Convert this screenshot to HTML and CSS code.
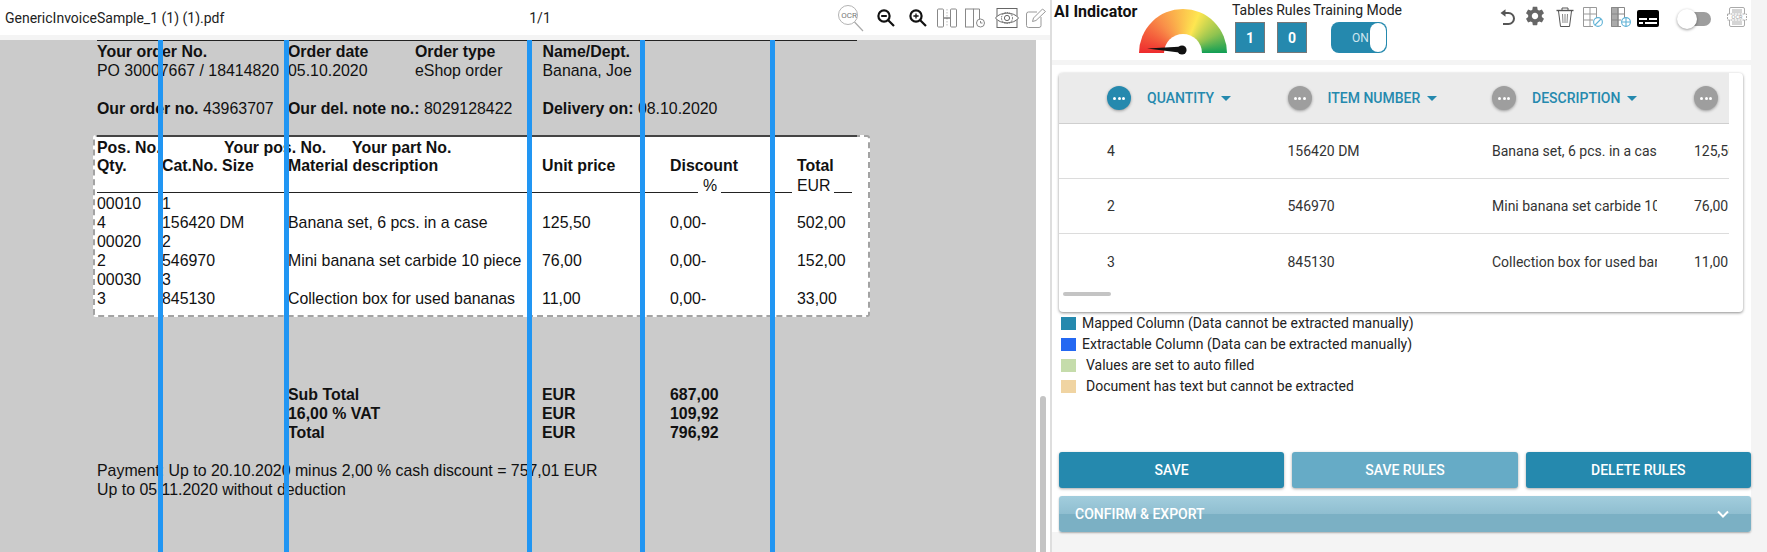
FILE: index.html
```html
<!DOCTYPE html>
<html>
<head>
  <title>Invoice Mapping</title>
  <link rel="stylesheet" href="styles.css">
</head>
<body>
  <div class="app">
    <section class="viewer">
      <div class="viewer-bar">
        <span class="file-name">GenericInvoiceSample_1 (1) (1).pdf</span>
        <span class="page-count">1/1</span>
        <div class="viewer-tools">
          <svg class="ocr-icon" width="26" height="28" viewBox="0 0 26 28" fill="none" stroke="#aaa" stroke-width="0.9">
            <circle cx="10" cy="11" r="9.5"/>
            <path d="M16.5 18L25 27" stroke-width="1.2"/>
            <text x="11" y="14" text-anchor="middle" font-family="Roboto" font-size="8" fill="#777" stroke="none">OCR</text>
          </svg>
          <svg class="tool-out" width="18" height="18" viewBox="0 0 18 18" fill="none" stroke="#111" stroke-width="2.2">
            <circle cx="7" cy="7" r="5.6"/>
            <path d="M11 11L17 17M4.2 7H9.8" />
          </svg>
          <svg class="tool-in" width="18" height="18" viewBox="0 0 18 18" fill="none" stroke="#111" stroke-width="2.2">
            <circle cx="7" cy="7" r="5.6"/>
            <path d="M11 11L17 17"/>
            <path d="M4.4 7H9.6M7 4.4V9.6" stroke-width="1.3"/>
          </svg>
          <svg class="tool-split" width="20" height="20" viewBox="0 0 20 20" fill="none" stroke="#888" stroke-width="1">
            <rect x="0.5" y="1" width="6" height="18" rx="1"/>
            <rect x="13.5" y="1" width="6" height="18" rx="1"/>
            <path d="M10 1V19" stroke-dasharray="1.5 1.5" stroke="#bbb"/>
            <path d="M7 10H13" stroke="#444"/>
          </svg>
          <svg class="tool-clock" width="20" height="20" viewBox="0 0 20 20" fill="none" stroke="#888" stroke-width="1">
            <rect x="0.5" y="1" width="8" height="18"/>
            <path d="M8.5 1H14.5V11"/>
            <circle cx="15.5" cy="15" r="4"/>
            <path d="M15.5 13V15H17.5"/>
          </svg>
          <svg class="tool-eye" width="24" height="20" viewBox="0 0 24 20" fill="none" stroke="#666" stroke-width="1">
            <rect x="2" y="0.5" width="20" height="19"/>
            <path d="M0.5 10C5 3.5 19 3.5 23.5 10C19 16.5 5 16.5 0.5 10Z" fill="#fff"/>
            <circle cx="12" cy="10" r="5.5" stroke-dasharray="1.5 1"/>
            <circle cx="12" cy="10" r="2.6"/>
          </svg>
          <svg class="tool-edit" width="20" height="20" viewBox="0 0 20 20" fill="none" stroke="#999" stroke-width="1">
            <path d="M11 4H2.5A2 2 0 0 0 .5 6V17.5A2 2 0 0 0 2.5 19.5H13A2 2 0 0 0 15 17.5V9"/>
            <path d="M6.5 13.5L7.5 10L16.5 1L19.5 3.5L10 12.5Z"/>
          </svg>
        </div>
      </div>
      <div class="viewer-gap"></div>
      <div class="viewer-body">
        <div class="pdf-page">
          <div class="pdf-rule rule-top"></div>
          <b class="pdf-text" style="left:97px;top:2px">Your order No.</b>
          <b class="pdf-text" style="left:288px;top:2px">Order date</b>
          <b class="pdf-text" style="left:415px;top:2px">Order type</b>
          <b class="pdf-text" style="left:542.5px;top:2px">Name/Dept.</b>
          <span class="pdf-text" style="left:97px;top:21px">PO 30007667 / 18414820</span>
          <span class="pdf-text" style="left:288px;top:21px">05.10.2020</span>
          <span class="pdf-text" style="left:415px;top:21px">eShop order</span>
          <span class="pdf-text" style="left:542.5px;top:21px">Banana, Joe</span>
          <span class="pdf-text" style="left:97px;top:59px"><b>Our order no.</b> 43963707</span>
          <span class="pdf-text" style="left:288px;top:59px"><b>Our del. note no.:</b> 8029128422</span>
          <span class="pdf-text" style="left:542.5px;top:59px"><b>Delivery on:</b> 08.10.2020</span>

          <div class="pdf-table"></div>
          <div class="pdf-rule rule-table"></div>
          <b class="pdf-text" style="left:97px;top:98px">Pos. No.</b>
          <b class="pdf-text" style="left:224px;top:98px">Your pos. No.</b>
          <b class="pdf-text" style="left:352px;top:98px">Your part No.</b>
          <b class="pdf-text" style="left:97px;top:116px">Qty.</b>
          <b class="pdf-text" style="left:162px;top:116px">Cat.No. Size</b>
          <b class="pdf-text" style="left:288px;top:116px">Material description</b>
          <b class="pdf-text" style="left:542px;top:116px">Unit price</b>
          <b class="pdf-text" style="left:670px;top:116px">Discount</b>
          <b class="pdf-text" style="left:797px;top:116px">Total</b>
          <span class="pdf-text" style="left:703px;top:136px">%</span>
          <span class="pdf-text" style="left:797px;top:136px">EUR</span>
          <div class="pdf-rule rule-head-a"></div>
          <div class="pdf-rule rule-head-b"></div>
          <div class="pdf-rule rule-head-c"></div>

          <span class="pdf-text" style="left:97px;top:154px">00010</span>
          <span class="pdf-text" style="left:162px;top:154px">1</span>
          <span class="pdf-text" style="left:97px;top:173px">4</span>
          <span class="pdf-text" style="left:162px;top:173px">156420 DM</span>
          <span class="pdf-text" style="left:288px;top:173px">Banana set, 6 pcs. in a case</span>
          <span class="pdf-text" style="left:542px;top:173px">125,50</span>
          <span class="pdf-text" style="left:670px;top:173px">0,00-</span>
          <span class="pdf-text" style="left:797px;top:173px">502,00</span>
          <span class="pdf-text" style="left:97px;top:192px">00020</span>
          <span class="pdf-text" style="left:162px;top:192px">2</span>
          <span class="pdf-text" style="left:97px;top:211px">2</span>
          <span class="pdf-text" style="left:162px;top:211px">546970</span>
          <span class="pdf-text" style="left:288px;top:211px">Mini banana set carbide 10 piece</span>
          <span class="pdf-text" style="left:542px;top:211px">76,00</span>
          <span class="pdf-text" style="left:670px;top:211px">0,00-</span>
          <span class="pdf-text" style="left:797px;top:211px">152,00</span>
          <span class="pdf-text" style="left:97px;top:230px">00030</span>
          <span class="pdf-text" style="left:162px;top:230px">3</span>
          <span class="pdf-text" style="left:97px;top:249px">3</span>
          <span class="pdf-text" style="left:162px;top:249px">845130</span>
          <span class="pdf-text" style="left:288px;top:249px">Collection box for used bananas</span>
          <span class="pdf-text" style="left:542px;top:249px">11,00</span>
          <span class="pdf-text" style="left:670px;top:249px">0,00-</span>
          <span class="pdf-text" style="left:797px;top:249px">33,00</span>

          <b class="pdf-text" style="left:288px;top:345px">Sub Total</b>
          <b class="pdf-text" style="left:542px;top:345px">EUR</b>
          <b class="pdf-text" style="left:670px;top:345px">687,00</b>
          <b class="pdf-text" style="left:288px;top:364px">16,00 % VAT</b>
          <b class="pdf-text" style="left:542px;top:364px">EUR</b>
          <b class="pdf-text" style="left:670px;top:364px">109,92</b>
          <b class="pdf-text" style="left:288px;top:383px">Total</b>
          <b class="pdf-text" style="left:542px;top:383px">EUR</b>
          <b class="pdf-text" style="left:670px;top:383px">796,92</b>
          <span class="pdf-text" style="left:97px;top:421px">Payment: Up to 20.10.2020 minus 2,00 % cash discount = 757,01 EUR</span>
          <span class="pdf-text" style="left:97px;top:440px">Up to 05.11.2020 without deduction</span>

          <div class="col-line" style="left:158px"></div>
          <div class="col-line" style="left:284px"></div>
          <div class="col-line" style="left:527px"></div>
          <div class="col-line" style="left:640px"></div>
          <div class="col-line" style="left:770px"></div>
        </div>
        <div class="viewer-scroll"><div class="viewer-thumb"></div></div>
      </div>
    </section>

    <section class="side">
      <header class="side-head">
        <div class="ai-title">AI Indicator</div>
        <div class="gauge">
          <div class="gauge-hole"></div>
          <svg class="gauge-needle" width="44" height="14" viewBox="0 0 44 14">
            <path d="M0 4.5L36 2.5V9Z" fill="#111"/>
            <circle cx="35" cy="6" r="4.6" fill="#111"/>
          </svg>
        </div>
        <div class="stats">
          <div class="stats-labels">
            <span class="lab-tables">Tables</span>
            <span class="lab-rules">Rules</span>
            <span>Training Mode</span>
          </div>
          <div class="stats-values">
            <span class="stat-box">1</span>
            <span class="stat-box">0</span>
            <div class="train-toggle"><span>ON</span><i></i></div>
          </div>
        </div>
        <div class="side-tools">
          <svg class="tool-undo" width="18" height="18" viewBox="0 0 18 18" fill="none" stroke="#555" stroke-width="2">
            <path d="M6 5H9.5A5.5 5.5 0 1 1 9.5 16H4"/>
            <path d="M6.5 1.2V8.8L1.5 5Z" fill="#555" stroke="none"/>
          </svg>
          <svg class="tool-gear" width="22" height="22" viewBox="0 0 24 24" fill="#666"><path d="M19.43 12.98c.04-.32.07-.64.07-.98s-.03-.66-.07-.98l2.11-1.65c.19-.15.24-.42.12-.64l-2-3.46c-.12-.22-.39-.3-.61-.22l-2.49 1c-.52-.4-1.08-.73-1.69-.98l-.38-2.65C14.46 2.18 14.25 2 14 2h-4c-.25 0-.46.18-.49.42l-.38 2.65c-.61.25-1.17.59-1.69.98l-2.49-1c-.23-.09-.49 0-.61.22l-2 3.46c-.13.22-.07.49.12.64l2.11 1.65c-.04.32-.07.65-.07.98s.03.66.07.98l-2.11 1.65c-.19.15-.24.42-.12.64l2 3.46c.12.22.39.3.61.22l2.49-1c.52.4 1.08.73 1.69.98l.38 2.65c.03.24.24.42.49.42h4c.25 0 .46-.18.49-.42l.38-2.65c.61-.25 1.17-.59 1.69-.98l2.49 1c.23.09.49 0 .61-.22l2-3.46c.12-.22.07-.49-.12-.64l-2.11-1.65zM12 15.5c-1.93 0-3.5-1.57-3.5-3.5s1.57-3.5 3.5-3.5 3.5 1.57 3.5 3.5-1.57 3.5-3.5 3.5z"/></svg>
          <svg class="tool-trash" width="18" height="20" viewBox="0 0 18 20" fill="none" stroke="#555" stroke-width="1">
            <path d="M0.5 3.5H17.5" stroke-width="1.4"/>
            <path d="M6 3V1H12V3"/>
            <path d="M2.5 4L4.5 19.5H13.5L15.5 4"/>
            <path d="M6.5 7L7 16M9 7V16M11.5 7L11 16" stroke="#888"/>
          </svg>
          <svg class="tool-ban" width="20" height="20" viewBox="0 0 20 20" fill="none" stroke="#999" stroke-width="1">
            <path d="M0.5 0.5H13.5V11M0.5 0.5V19.5H10M0.5 7H13.5M0.5 13H10M7 0.5V19.5"/>
            <circle cx="15" cy="15" r="4.4" stroke="#5fb2d6" stroke-width="1.1"/>
            <path d="M12 18L18 12" stroke="#5fb2d6" stroke-width="1.1"/>
          </svg>
          <svg class="tool-plus" width="20" height="20" viewBox="0 0 20 20" fill="none" stroke="#888" stroke-width="1">
            <path d="M0.5 0.5H7V19.5H0.5Z" fill="#aaa"/>
            <path d="M0.5 0.5H13.5V11M0.5 19.5H10M0.5 7H13.5M0.5 13H10M7 0.5V19.5"/>
            <circle cx="15" cy="15" r="4.4" stroke="#5fb2d6" stroke-width="1.1"/>
            <path d="M10.6 15H19.4M15 10.6V19.4" stroke="#5fb2d6" stroke-width="1.1"/>
          </svg>
          <svg class="tool-subs" width="22" height="17" viewBox="0 0 22 17">
            <rect width="22" height="17" rx="2" fill="#000"/>
            <path d="M2 8H10V10H2ZM12 8H20V10H12ZM2 12H6V14H2ZM8 12H20V14H8Z" fill="#fff"/>
          </svg>
          <div class="mini-toggle"><i></i></div>
          <svg class="tool-ocr" width="20" height="20" viewBox="0 0 20 20" fill="none" stroke="#aaa" stroke-width="1">
            <rect x="2.5" y="0.5" width="15" height="19" rx="1.5"/>
            <path d="M5 3H15M5 5H15M5 15H15M5 17H15" />
            <rect x="0.5" y="7" width="19" height="6" fill="#fff" stroke-dasharray="2 1"/>
            <text x="10" y="12" text-anchor="middle" font-family="Roboto" font-size="5.5" fill="#999" stroke="none">OCR</text>
          </svg>
        </div>
      </header>
      <div class="side-gap"></div>

      <div class="side-main">
        <div class="card">
          <div class="grid-scroll">
            <div class="grid-row grid-head">
              <div class="head-cell"><span class="dots dots-on"><i></i><i></i><i></i></span><span class="head-label">QUANTITY</span><i class="caret"></i></div>
              <div class="head-cell"><span class="dots"><i></i><i></i><i></i></span><span class="head-label">ITEM NUMBER</span><i class="caret"></i></div>
              <div class="head-cell"><span class="dots"><i></i><i></i><i></i></span><span class="head-label">DESCRIPTION</span><i class="caret"></i></div>
              <div class="head-cell"><span class="dots"><i></i><i></i><i></i></span></div>
            </div>
            <div class="grid-row grid-line">
              <div>4</div><div>156420 DM</div><div class="cell-desc">Banana set, 6 pcs. in a case</div><div>125,50</div>
            </div>
            <div class="grid-row grid-line">
              <div>2</div><div>546970</div><div class="cell-desc">Mini banana set carbide 10 piece</div><div>76,00</div>
            </div>
            <div class="grid-row">
              <div>3</div><div>845130</div><div class="cell-desc">Collection box for used bananas</div><div>11,00</div>
            </div>
          </div>
          <div class="grid-thumb"></div>
        </div>

        <ul class="legend">
          <li><i class="swatch sw-mapped"></i>Mapped Column (Data cannot be extracted manually)</li>
          <li><i class="swatch sw-extract"></i>Extractable Column (Data can be extracted manually)</li>
          <li class="legend-wide"><i class="swatch sw-auto"></i>Values are set to auto filled</li>
          <li class="legend-wide"><i class="swatch sw-text"></i>Document has text but cannot be extracted</li>
        </ul>

        <div class="actions">
          <button class="btn">SAVE</button>
          <button class="btn btn-off">SAVE RULES</button>
          <button class="btn">DELETE RULES</button>
        </div>
        <div class="export">
          <span>CONFIRM &amp; EXPORT</span>
          <svg width="14" height="14" viewBox="0 0 14 14" fill="none" stroke="#fff" stroke-width="2"><path d="M2 4.5L7 9.5L12 4.5"/></svg>
        </div>
      </div>
    </section>
  </div>
</body>
</html>
```

FILE: styles.css
```css
* {
  box-sizing: border-box;
}
html, body {
  margin: 0;
  height: 552px;
  overflow: hidden;
}
body {
  background: #f4f4f4;
  font-family: Roboto, sans-serif;
  color: #222;
}
.app {
  display: flex;
  height: 552px;
}

/* left: pdf viewer */
.viewer {
  width: 1050px;
  display: flex;
  flex-direction: column;
  background: #fff;
}
.viewer-bar {
  height: 35px;
  display: flex;
  align-items: center;
  padding-left: 5px;
  font-size: 14px;
}
.file-name {
  width: 520px;
}
.page-count {
  width: 30px;
  text-align: center;
}
.viewer-tools {
  margin-left: 283px;
  display: flex;
  align-items: center;
  flex-shrink: 0;
}
.viewer-tools svg {
  display: block;
}
.ocr-icon {
  margin-top: 1px;
}
.tool-out {
  margin-left: 13px;
}
.tool-in {
  margin-left: 14px;
}
.tool-split {
  margin-left: 10px;
}
.tool-clock {
  margin-left: 8px;
}
.tool-eye {
  margin-left: 10px;
}
.tool-edit {
  margin-left: 7px;
}
.viewer-gap {
  height: 5px;
  background: #f4f4f4;
}
.viewer-body {
  flex: 1;
  display: flex;
}
.pdf-page {
  width: 1036px;
  height: 512px;
  background: #cbcbcb;
  position: relative;
  overflow: hidden;
}
.pdf-text {
  position: absolute;
  font-family: "Liberation Sans", Arial, sans-serif;
  font-size: 15.9px;
  line-height: 19px;
  color: #111;
  white-space: nowrap;
}
.pdf-rule {
  position: absolute;
  height: 1px;
  background: #222;
}
.rule-top {
  left: 97px;
  top: 0;
  width: 760px;
}
.rule-table {
  left: 97px;
  top: 95px;
  width: 760px;
  height: 2px;
  background: #444;
}
.rule-head-a {
  left: 97px;
  top: 152px;
  width: 601px;
}
.rule-head-b {
  left: 721px;
  top: 152px;
  width: 71px;
}
.rule-head-c {
  left: 834px;
  top: 152px;
  width: 18px;
}
.pdf-table {
  position: absolute;
  left: 93px;
  top: 95px;
  width: 777px;
  height: 182px;
  background: #fff;
  border: 2px dashed #a3a3a3;
  border-radius: 3px;
}
.col-line {
  position: absolute;
  top: 0;
  bottom: 0;
  width: 5px;
  background: #2196f3;
}
.viewer-scroll {
  flex: 1;
  background: #fff;
  position: relative;
}
.viewer-thumb {
  position: absolute;
  left: 4px;
  right: 4px;
  top: 356px;
  bottom: 0;
  background: #c4c4c4;
  border-radius: 3px 3px 0 0;
}

/* right: mapping panel */
.side {
  width: 701px;
  border-left: 2px solid #dedede;
  display: flex;
  flex-direction: column;
}
.side-head {
  height: 60px;
  background: #fff;
  display: flex;
  position: relative;
}
.ai-title {
  width: 85px;
  margin-left: 2px;
  padding-top: 2px;
  font-size: 16px;
  font-weight: 700;
  line-height: 19px;
  color: #111;
}
.gauge {
  width: 88px;
  height: 44px;
  margin-top: 9px;
  position: relative;
  border-radius: 44px 44px 0 0;
  background: conic-gradient(from 270deg at 50% 100%, #ee2b2e 0deg, #f98f49 55deg, #fee650 112deg, #8fc350 150deg, #109e55 180deg, #109e55 360deg);
}
.gauge-hole {
  position: absolute;
  left: 25px;
  top: 25px;
  width: 38px;
  height: 19px;
  border-radius: 19px 19px 0 0;
  background: #fff;
}
.gauge-needle {
  position: absolute;
  left: 8px;
  top: 35px;
}
.stats {
  width: 170px;
  margin-left: 5px;
  font-size: 14px;
  color: #222;
}
.stats-labels {
  display: flex;
  height: 22px;
  line-height: 21px;
  white-space: nowrap;
}
.lab-tables {
  width: 47px;
}
.lab-rules {
  width: 39px;
}
.stats-values {
  display: flex;
  padding-left: 3px;
}
.stat-box {
  width: 30px;
  height: 31px;
  margin-right: 12px;
  background: #2589ae;
  border: 1px solid #777;
  color: #fff;
  font-weight: 700;
  font-size: 14px;
  display: flex;
  align-items: center;
  justify-content: center;
}
.train-toggle {
  width: 56px;
  height: 31px;
  margin-left: 12px;
  padding: 1px;
  background: #2589ae;
  border-radius: 8px;
  display: flex;
  align-items: center;
  justify-content: space-between;
  color: #cfe6ef;
  font-size: 12px;
}
.train-toggle span {
  padding-left: 20px;
}
.train-toggle i {
  width: 16px;
  height: 29px;
  background: #fff;
  border-radius: 8px;
}
.side-tools {
  position: absolute;
  right: 4px;
  top: 7px;
  height: 20px;
  display: flex;
  align-items: center;
}
.side-tools svg {
  display: block;
  flex-shrink: 0;
}
.tool-gear {
  margin-left: 7px;
  margin-bottom: 2px;
}
.tool-trash {
  margin-left: 10px;
}
.tool-ban {
  margin-left: 9px;
}
.tool-plus {
  margin-left: 8px;
}
.tool-subs {
  margin-left: 6px;
  margin-top: 3px;
}
.mini-toggle {
  width: 26px;
  height: 14px;
  margin: 4px 16px 0 26px;
  background: #9e9e9e;
  border-radius: 7px;
  position: relative;
}
.mini-toggle i {
  position: absolute;
  left: -8px;
  top: -3px;
  width: 20px;
  height: 20px;
  border-radius: 50%;
  background: #fff;
  box-shadow: 0 1px 3px rgba(0, 0, 0, 0.4);
}
.side-gap {
  height: 5px;
  background: #f4f4f4;
  width: 699px;
}
.side-main {
  width: 699px;
  height: 467px;
  background: #fff;
  padding: 8px 0 0 7px;
}
.card {
  width: 684px;
  height: 239px;
  background: #fff;
  border-radius: 4px;
  box-shadow: 0 1px 3px rgba(0, 0, 0, 0.45);
  position: relative;
}
.grid-scroll {
  width: 670px;
  overflow: hidden;
}
.grid-row {
  display: grid;
  grid-template-columns: 180.5px 204.5px 202px 60px;
  padding-left: 48px;
  height: 55px;
  align-items: center;
  font-size: 14px;
  color: #333;
  white-space: nowrap;
  width: 720px;
}
.grid-line {
  border-bottom: 1px solid #dcdcdc;
}
.grid-head {
  height: 51px;
  background: #ebebeb;
  border-bottom: 1px solid #cfcfcf;
  border-radius: 4px 0 0 0;
}
.head-cell {
  display: flex;
  align-items: center;
}
.head-label {
  margin-left: 16px;
  font-weight: 500;
  color: #2589ae;
}
.dots {
  width: 24px;
  height: 24px;
  border-radius: 50%;
  background: #9e9e9e;
  display: flex;
  align-items: center;
  justify-content: center;
  gap: 1.5px;
  box-shadow: 0 1px 3px rgba(0, 0, 0, 0.35);
}
.dots i {
  width: 3px;
  height: 3px;
  border-radius: 50%;
  background: #fff;
}
.dots-on {
  background: #2589ae;
}
.caret {
  width: 0;
  height: 0;
  margin-left: 7px;
  border-left: 5px solid transparent;
  border-right: 5px solid transparent;
  border-top: 5px solid #2589ae;
}
.cell-desc {
  width: 165px;
  overflow: hidden;
}
.grid-thumb {
  position: absolute;
  left: 4px;
  top: 219px;
  width: 48px;
  height: 4px;
  border-radius: 2px;
  background: #c4c4c4;
}
.legend {
  list-style: none;
  margin: 0;
  padding: 0 0 0 2px;
  height: 140px;
  font-size: 14px;
  color: #222;
}
.legend li {
  height: 21px;
  display: flex;
  align-items: center;
}
.swatch {
  width: 15px;
  height: 13px;
  margin-right: 6px;
  margin-top: 1px;
}
.legend-wide .swatch {
  margin-right: 10px;
}
.sw-mapped {
  background: #2589ae;
}
.sw-extract {
  background: #2468f2;
}
.sw-auto {
  background: #c5dcab;
}
.sw-text {
  background: #f0d4a2;
}
.actions {
  display: flex;
  gap: 8px;
}
.btn {
  flex: 1;
  height: 36px;
  border: 0;
  border-radius: 3px;
  background: #2589ae;
  color: #fff;
  font-family: Roboto, sans-serif;
  font-size: 14px;
  font-weight: 500;
  box-shadow: 0 1px 3px rgba(0, 0, 0, 0.35);
}
.btn-off {
  background: #66abc6;
}
.export {
  height: 36px;
  margin-top: 8px;
  padding: 0 21px 0 16px;
  display: flex;
  align-items: center;
  justify-content: space-between;
  border-radius: 3px;
  background: linear-gradient(#a2cddd, #8fbed0 50%, #7bb0c4 50%, #7bb0c4);
  color: #fff;
  font-size: 14px;
  font-weight: 500;
  box-shadow: 0 1px 2px rgba(0, 0, 0, 0.3);
}
```
